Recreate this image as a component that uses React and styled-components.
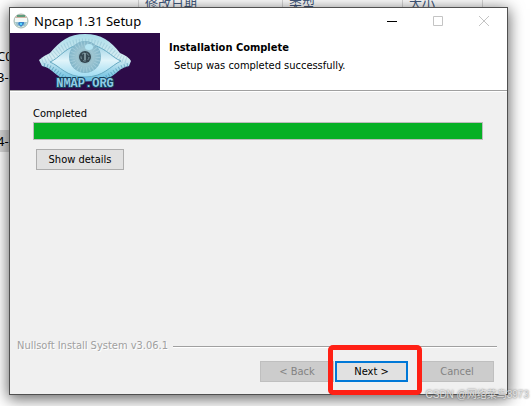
import React from 'react';
import styled, { createGlobalStyle } from 'styled-components';

const GlobalStyle = createGlobalStyle`
  * {
    box-sizing: border-box;
  }

  body {
    margin: 0;
    background: #fff;
    color: #000;
    font: 11px/16px "DejaVu Sans Condensed", "Noto Sans CJK SC", sans-serif;
  }
`;

const Desktop = styled.div`
  position: relative;
  display: flex;
  min-height: 100vh;
  padding: 7px 24px 11px 9px;
  overflow: hidden;
`;

const Explorer = styled.div`
  position: absolute;
  inset: 0;
  overflow: hidden;
  font-family: "Noto Sans", "Noto Sans CJK SC", sans-serif;
`;

const Columns = styled.div`
  position: absolute;
  top: -5px;
  left: 138px;
  display: grid;
  grid-template-columns: 144px 120px 80px;
  border-right: 1px solid #d8d8d8;
  color: #43597d;
  font-size: 13px;
  line-height: 16px;
`;

const Column = styled.span`
  padding-left: 6px;
  border-left: 1px solid #d8d8d8;
`;

const Fragment = styled.span`
  position: absolute;
  top: ${(props) => props.$top}px;
  left: -3px;
  width: 20px;
  height: 22px;
  background: ${(props) => (props.$selected ? '#d9d9d9' : 'none')};
  font-size: 13px;
  line-height: 22px;
`;

const Window = styled.section`
  position: relative;
  display: flex;
  flex: 1;
  flex-direction: column;
  min-width: 0;
  border: 1px solid #505050;
  background: #f0f0f0;
  box-shadow: 0 3px 14px 1px rgba(0, 0, 0, 0.6);
`;

const TitleBar = styled.header`
  display: flex;
  align-items: center;
  height: 25px;
  padding-left: 3px;
  background: #fff;
`;

const Title = styled.h1`
  flex: 1;
  margin: 0;
  padding-left: 5px;
  font: 13px/24px "Noto Sans", sans-serif;
`;

const CaptionButton = styled.button`
  display: flex;
  align-items: center;
  justify-content: center;
  width: 46px;
  height: 24px;
  padding: 0;
  border: 0;
  background: none;
  color: ${(props) => (props.disabled ? '#c4c4c4' : '#000')};
`;

const Banner = styled.div`
  display: flex;
  gap: 9px;
  border-bottom: 1px solid #a0a0a0;
  background: #fff;
`;

const BannerText = styled.div`
  padding-top: 7px;
`;

const Heading = styled.h2`
  margin: 0;
  font-size: 11px;
  font-weight: 700;
`;

const Subheading = styled.p`
  margin: 2px 0 0 5px;
`;

const Content = styled.main`
  flex: 1;
  padding: 14px 24px 14px 23px;
  border-top: 1px solid #fff;
`;

const Status = styled.label`
  display: block;
`;

const Progress = styled.progress`
  display: block;
  width: 100%;
  height: 18px;
  margin: 0 0 9px;
  border: 1px solid #bcbcbc;
  background: #e6e6e6;
  appearance: none;

  &::-webkit-progress-bar {
    background: #e6e6e6;
  }

  &::-webkit-progress-value {
    background: #06b025;
  }
`;

const Button = styled.button`
  width: ${(props) => props.$width || 74}px;
  height: 21px;
  padding: 0;
  border: ${(props) => (props.$primary ? '2px solid #0078d7' : '1px solid #adadad')};
  background: #e1e1e1;
  color: #000;
  font: inherit;

  &:disabled {
    border-color: #bfbfbf;
    background: #ccc;
    color: #838383;
  }
`;

const DetailsRow = styled.div`
  padding-left: 3px;
`;

const Branding = styled.div`
  display: flex;
  align-items: center;
  gap: 5px;
  padding: 0 10px 0 7px;
  color: #a0a0a0;
  text-shadow: 1px 1px #fff;
`;

const Rule = styled.hr`
  flex: 1;
  margin: 2px 0 0;
  border: 0;
  border-top: 1px solid #a0a0a0;
  border-bottom: 1px solid #fff;
`;

const Actions = styled.footer`
  display: flex;
  justify-content: flex-end;
  gap: 12px;
  padding: 7px 13px 12px;
`;

const StepButtons = styled.div`
  display: flex;
  gap: 1px;
`;

const Highlight = styled.div`
  position: relative;
  display: flex;

  &::after {
    position: absolute;
    inset: -16px -14px -13px -7px;
    border: 5px solid #ff2015;
    border-radius: 5px;
    content: '';
    pointer-events: none;
  }
`;

const Watermark = styled.span`
  position: absolute;
  right: 3px;
  bottom: 3px;
  color: rgba(235, 235, 235, 0.9);
  font: 10px/16px "Liberation Sans", "Noto Sans CJK SC", sans-serif;
  text-shadow: 0 0 2px #555;
`;

const AppIcon = () => (
  <svg width="16" height="16" viewBox="0 0 16 16" aria-hidden="true">
    <circle cx="8" cy="8" r="7" fill="#d3e4dc" stroke="#a5b9b3" />
    <path d="M2 5a7 7 0 0 1 12 0z" fill="#d5b5a6" />
    <path d="M4 2h8v2H4z" fill="#5f9c7c" />
    <path d="M2 5h12v4H2z" fill="#f4f9f7" />
    <path d="M2 9h12l-2 4H4z" fill="#9dc3ce" />
    <path d="M6 9h5v2l-3 3-3-3z" fill="#3c86cb" />
    <path d="M7 10h2v2H7z" fill="#55d6ff" />
  </svg>
);

const NmapLogo = () => (
  <svg width="150" height="57" viewBox="0 0 150 57" role="img" aria-label="NMAP.ORG">
    <defs>
      <linearGradient id="lid" x2="0" y2="1">
        <stop stopColor="#a9dce9" />
        <stop offset=".5" stopColor="#d8eef3" />
        <stop offset="1" stopColor="#62bce0" />
      </linearGradient>
      <linearGradient id="white" x2="0" y2="1">
        <stop stopColor="#9bd0e2" />
        <stop offset=".5" stopColor="#e0f4fa" />
        <stop offset="1" stopColor="#9edbf1" />
      </linearGradient>
      <radialGradient id="iris">
        <stop stopColor="#648c9b" />
        <stop offset=".5" stopColor="#9fc6d2" />
        <stop offset="1" stopColor="#80b5c9" />
      </radialGradient>
    </defs>
    <path d="M0 0h150v57H0z" fill="#2d0b48" />
    <path d="M29 27Q33 23 40 20C50 8 59 1 75 1S101 8 110 20Q118 23 121 28L119 33C110 34 106 42 97 46Q75 51 53 46C44 41 40 34 32 33Z" fill="url(#lid)" />
    <path d="M32 28Q41 25 47 19Q60 9 75 9T103 20Q109 26 118 28" fill="none" stroke="#7fb4c7" strokeWidth="7" strokeDasharray="1 2" opacity=".4" />
    <path d="M34 32C44 34 49 42 56 45M118 32C108 34 102 42 94 45" fill="none" stroke="#4a91af" strokeWidth="4" strokeDasharray="1 2" opacity=".6" />
    <path d="M40 29C49 26 57 11 75 11S102 25 111 28C100 33 94 44 75 44S50 33 40 29Z" fill="url(#white)" stroke="#67aac3" />
    <circle cx="75" cy="24" r="16" fill="url(#iris)" />
    <circle cx="75" cy="24" r="13" fill="none" stroke="#b8dce7" strokeWidth="5" strokeDasharray="1 2" opacity=".5" />
    <circle cx="75" cy="24" r="6" fill="#344650" />
    <circle cx="75" cy="24" r="4" fill="none" stroke="#7c969f" strokeDasharray="3 2" />
    <path d="M75 20v7" stroke="#c0d9df" />
    <ellipse cx="79" cy="14" rx="4" ry="3" fill="#b5e6f4" />
    <text x="75" y="54" textAnchor="middle" fill="#8fcce6" stroke="#163e5a" strokeWidth="2" paintOrder="stroke" fontFamily="Liberation Mono, monospace" fontSize="12" fontWeight="700">NMAP.ORG</text>
  </svg>
);

const App = () => (
  <>
    <GlobalStyle />
    <Desktop>
      <Explorer>
        <Columns>
          <Column>修改日期</Column>
          <Column>类型</Column>
          <Column>大小</Column>
        </Columns>
        <Fragment $top={45}>C0</Fragment>
        <Fragment $top={66}>3-1</Fragment>
        <Fragment $top={130} $selected>4-3</Fragment>
      </Explorer>

      <Window>
        <TitleBar>
          <AppIcon />
          <Title>Npcap 1.31 Setup</Title>
          <CaptionButton aria-label="Minimize">
            <svg width="10" height="10"><path d="M0 5.5h10" stroke="currentColor" /></svg>
          </CaptionButton>
          <CaptionButton aria-label="Maximize" disabled>
            <svg width="10" height="10"><path d="M.5.5h9v9h-9z" fill="none" stroke="currentColor" /></svg>
          </CaptionButton>
          <CaptionButton aria-label="Close" disabled>
            <svg width="10" height="10"><path d="M0 0l10 10M10 0L0 10" stroke="currentColor" /></svg>
          </CaptionButton>
        </TitleBar>

        <Banner>
          <NmapLogo />
          <BannerText>
            <Heading>Installation Complete</Heading>
            <Subheading>Setup was completed successfully.</Subheading>
          </BannerText>
        </Banner>

        <Content>
          <Status htmlFor="install-progress">Completed</Status>
          <Progress id="install-progress" value="100" max="100" />
          <DetailsRow>
            <Button $width={88}>Show details</Button>
          </DetailsRow>
        </Content>

        <Branding>
          Nullsoft Install System v3.06.1
          <Rule />
        </Branding>
        <Actions>
          <StepButtons>
            <Button disabled>&lt; Back</Button>
            <Highlight>
              <Button $primary $width={73}>Next &gt;</Button>
            </Highlight>
          </StepButtons>
          <Button disabled>Cancel</Button>
        </Actions>
      </Window>
      <Watermark>CSDN @网络菜鸟3973</Watermark>
    </Desktop>
  </>
);

export default App;
